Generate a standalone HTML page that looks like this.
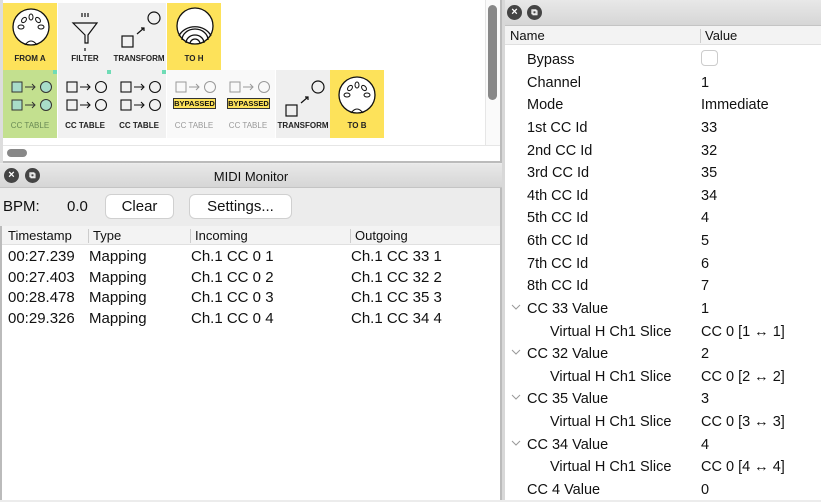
<!DOCTYPE html>
<html><head><style>
*{margin:0;padding:0;box-sizing:border-box}
body{width:821px;height:500px;position:relative;overflow:hidden;background:#ececec;font-family:"Liberation Sans",sans-serif;color:#111}
.a{position:absolute}
.t{font-size:14.5px;white-space:nowrap}
.tile{position:absolute;width:54px;height:68px}
.lab{position:absolute;bottom:8px;left:0;width:100%;text-align:center;font-size:8px;font-weight:bold;color:#222}
.xb{position:absolute;width:15px;height:15px;border-radius:50%;background:#444;color:#fff;font-size:11px;text-align:center;line-height:15px;font-weight:bold}
.btn{position:absolute;background:#fff;border:1px solid #d0d0d0;border-radius:6px;font-size:15px;text-align:center;line-height:23px}
.chev{position:absolute;left:511px}
</style></head><body>
<div class="a" style="left:0;top:0;width:502px;height:163px;background:#fff;border-right:2px solid #bbb;border-bottom:2px solid #bbb"></div>
<div class="a" style="left:0;top:0;width:3px;height:163px;background:#ddd"></div>
<div class="a" style="left:485px;top:0;width:15px;height:145px;background:#fafafa;border-left:1px solid #e6e6e6"></div>
<div class="a" style="left:488px;top:5px;width:9px;height:95px;border-radius:5px;background:#888"></div>
<div class="a" style="left:3px;top:145px;width:497px;height:1px;background:#e6e6e6"></div>
<div class="a" style="left:7px;top:149px;width:20px;height:8px;border-radius:4px;background:#888"></div>

<div class="tile" style="left:3px;top:3px;background:#fde25a"><svg class="a" style="left:9px;top:5px" width="38" height="38"><circle cx="19" cy="19" r="18" fill="#fff" stroke="#111" stroke-width="1.3"/><ellipse cx="19" cy="9" rx="2" ry="3" fill="none" stroke="#111"/><ellipse cx="12" cy="12" rx="2" ry="3" fill="none" stroke="#111" transform="rotate(40 12 12)"/><ellipse cx="26" cy="12" rx="2" ry="3" fill="none" stroke="#111" transform="rotate(-40 26 12)"/><ellipse cx="9" cy="19" rx="3" ry="2" fill="none" stroke="#111"/><ellipse cx="29" cy="19" rx="3" ry="2" fill="none" stroke="#111"/><path d="M13 37 Q19 29 25 37" fill="none" stroke="#111"/></svg><div class="lab">FROM A</div></div>
<div class="tile" style="left:58px;top:3px;background:#f1f1f1"><svg class="a" style="left:13px;top:8px" width="30" height="40" fill="none" stroke="#111" stroke-width="1.2"><path d="M11 2v4M14 2v4M17 2v4M2 12h24L17 24v8h-3V24z M14 37v5"/></svg><div class="lab">FILTER</div></div>
<div class="tile" style="left:112px;top:3px;background:#f1f1f1"><svg class="a" style="left:8px;top:5px" width="42" height="42" fill="none" stroke="#111" stroke-width="1.2"><rect x="2" y="28" width="11" height="11"/><circle cx="34" cy="10" r="6"/><path d="M17 26l7-6m-3 0h3v3"/></svg><div class="lab">TRANSFORM</div></div>
<div class="tile" style="left:167px;top:3px;background:#fde25a"><svg class="a" style="left:8px;top:3px" width="40" height="42" fill="none" stroke="#111" stroke-width="1.3"><circle cx="20" cy="20" r="18" fill="#fff"/><path d="M4 30a17 14 0 0 1 32 0M7 34a13 11 0 0 1 26 0M11 37a9 8 0 0 1 18 0M15 38a5 5 0 0 1 10 0"/></svg><div class="lab">TO H</div></div>

<div class="tile" style="left:3px;top:70px;height:68px;background:#c3e08f"><svg class="a" style="left:8px;top:10px" width="42" height="34" stroke="#333" stroke-width="1"><rect x="1" y="2" width="10" height="10" fill="#a8dcc9"/><circle cx="35" cy="7" r="5.5" fill="#a8dcc9"/><path d="M14 7h10m-3-3l3 3-3 3" fill="none"/><rect x="1" y="20" width="10" height="10" fill="#a8dcc9"/><circle cx="35" cy="25" r="5.5" fill="#a8dcc9"/><path d="M14 25h10m-3-3l3 3-3 3" fill="none"/></svg><div class="lab" style="color:#6a8a55;font-weight:normal">CC TABLE</div></div>
<div class="a" style="left:53px;top:70px;width:4px;height:4px;background:#6fdcb6"></div>
<div class="tile" style="left:58px;top:70px;background:#f1f1f1"><svg class="a" style="left:8px;top:10px" width="42" height="34" stroke="#111" stroke-width="1.1" fill="none"><rect x="1" y="2" width="10" height="10"/><circle cx="35" cy="7" r="5.5"/><path d="M14 7h10m-3-3l3 3-3 3"/><rect x="1" y="20" width="10" height="10"/><circle cx="35" cy="25" r="5.5"/><path d="M14 25h10m-3-3l3 3-3 3"/></svg><div class="lab">CC TABLE</div></div>
<div class="a" style="left:107px;top:70px;width:4px;height:4px;background:#6fdcb6"></div>
<div class="tile" style="left:112px;top:70px;background:#f1f1f1"><svg class="a" style="left:8px;top:10px" width="42" height="34" stroke="#111" stroke-width="1.1" fill="none"><rect x="1" y="2" width="10" height="10"/><circle cx="35" cy="7" r="5.5"/><path d="M14 7h10m-3-3l3 3-3 3"/><rect x="1" y="20" width="10" height="10"/><circle cx="35" cy="25" r="5.5"/><path d="M14 25h10m-3-3l3 3-3 3"/></svg><div class="lab">CC TABLE</div></div>
<div class="a" style="left:162px;top:70px;width:4px;height:4px;background:#6fdcb6"></div>
<div class="tile" style="left:167px;top:70px;background:#f9f9f9"><svg class="a" style="left:8px;top:10px" width="42" height="34" stroke="#999" stroke-width="1" fill="none"><rect x="1" y="2" width="10" height="10"/><circle cx="35" cy="7" r="5.5"/><path d="M14 7h10m-3-3l3 3-3 3"/></svg><div class="a" style="left:6px;top:28px;width:43px;height:11px;background:#fde25a;border:1px solid #333;font-size:7.5px;font-weight:bold;text-align:center;line-height:9px">BYPASSED</div><div class="lab" style="color:#999;font-weight:normal">CC TABLE</div></div>
<div class="tile" style="left:221px;top:70px;background:#f9f9f9"><svg class="a" style="left:8px;top:10px" width="42" height="34" stroke="#999" stroke-width="1" fill="none"><rect x="1" y="2" width="10" height="10"/><circle cx="35" cy="7" r="5.5"/><path d="M14 7h10m-3-3l3 3-3 3"/></svg><div class="a" style="left:6px;top:28px;width:43px;height:11px;background:#fde25a;border:1px solid #333;font-size:7.5px;font-weight:bold;text-align:center;line-height:9px">BYPASSED</div><div class="lab" style="color:#999;font-weight:normal">CC TABLE</div></div>
<div class="tile" style="left:276px;top:70px;background:#efefef"><svg class="a" style="left:8px;top:7px" width="42" height="42" fill="none" stroke="#111" stroke-width="1.2"><rect x="2" y="28" width="11" height="11"/><circle cx="34" cy="10" r="6"/><path d="M17 26l7-6m-3 0h3v3"/></svg><div class="lab">TRANSFORM</div></div>
<div class="tile" style="left:330px;top:70px;background:#fde25a"><svg class="a" style="left:8px;top:6px" width="38" height="38"><circle cx="19" cy="19" r="18" fill="#fff" stroke="#111" stroke-width="1.3"/><ellipse cx="19" cy="9" rx="2" ry="3" fill="none" stroke="#111"/><ellipse cx="12" cy="12" rx="2" ry="3" fill="none" stroke="#111" transform="rotate(40 12 12)"/><ellipse cx="26" cy="12" rx="2" ry="3" fill="none" stroke="#111" transform="rotate(-40 26 12)"/><ellipse cx="9" cy="19" rx="3" ry="2" fill="none" stroke="#111"/><ellipse cx="29" cy="19" rx="3" ry="2" fill="none" stroke="#111"/><path d="M13 37 Q19 29 25 37" fill="none" stroke="#111"/></svg><div class="lab">TO B</div></div>

<div class="a" style="left:0;top:164px;width:502px;height:24px;background:linear-gradient(#e8e8e8,#d6d6d6);border-bottom:1px solid #c4c4c4"></div>
<div class="xb" style="left:4px;top:168px">×</div><div class="xb" style="left:25px;top:168px;font-size:9px">⧉</div>
<div class="a t" style="left:0;width:502px;top:169px;text-align:center;font-size:13px">MIDI Monitor</div>
<div class="a" style="left:0;top:188px;width:502px;height:38px;background:#ececec;border-right:2px solid #bbb"></div>
<div class="a t" style="left:3px;top:198px;font-size:15px">BPM:</div>
<div class="a t" style="left:67px;top:198px;font-size:15px">0.0</div>
<div class="btn" style="left:105px;top:194px;width:69px;height:25px">Clear</div>
<div class="btn" style="left:189px;top:194px;width:103px;height:25px">Settings...</div>
<div class="a" style="left:0;top:226px;width:502px;height:274px;background:#fff;border-right:2px solid #bbb;border-left:2px solid #bbb"></div>
<div class="a" style="left:2px;top:226px;width:498px;height:19px;background:#f3f3f3;border-bottom:1px solid #e0e0e0"></div>
<div class="a t" style="left:8px;top:228px;font-size:13px">Timestamp</div>
<div class="a" style="left:88px;top:229px;width:1px;height:14px;background:#ccc"></div>
<div class="a t" style="left:93px;top:228px;font-size:13px">Type</div>
<div class="a" style="left:190px;top:229px;width:1px;height:14px;background:#ccc"></div>
<div class="a t" style="left:195px;top:228px;font-size:13px">Incoming</div>
<div class="a" style="left:350px;top:229px;width:1px;height:14px;background:#ccc"></div>
<div class="a t" style="left:355px;top:228px;font-size:13px">Outgoing</div>
<div class="a t" style="left:8px;top:247px;line-height:20.6px;font-size:15px">00:27.239<br>00:27.403<br>00:28.478<br>00:29.326</div>
<div class="a t" style="left:89px;top:247px;line-height:20.6px;font-size:15px">Mapping<br>Mapping<br>Mapping<br>Mapping</div>
<div class="a t" style="left:191px;top:247px;line-height:20.6px;font-size:15px">Ch.1 CC 0 1<br>Ch.1 CC 0 2<br>Ch.1 CC 0 3<br>Ch.1 CC 0 4</div>
<div class="a t" style="left:351px;top:247px;line-height:20.6px;font-size:15px">Ch.1 CC 33 1<br>Ch.1 CC 32 2<br>Ch.1 CC 35 3<br>Ch.1 CC 34 4</div>

<div class="a" style="left:502px;top:0;width:3px;height:500px;background:#d8d8d8"></div>
<div class="a" style="left:505px;top:0;width:316px;height:26px;background:linear-gradient(#e8e8e8,#d6d6d6);border-bottom:1px solid #c4c4c4"></div>
<div class="xb" style="left:507px;top:5px">×</div><div class="xb" style="left:527px;top:5px;font-size:9px">⧉</div>
<div class="a" style="left:505px;top:26px;width:316px;height:474px;background:#fff"></div>
<div class="a" style="left:505px;top:26px;width:316px;height:19px;background:#f3f3f3;border-bottom:1px solid #e0e0e0"></div>
<div class="a t" style="left:510px;top:28px;font-size:13px">Name</div>
<div class="a" style="left:700px;top:29px;width:1px;height:14px;background:#ccc"></div>
<div class="a t" style="left:705px;top:28px;font-size:13px">Value</div>
<div class="a" style="left:701px;top:50px;width:17px;height:16px;border:1px solid #ccc;border-radius:4px;background:#fff"></div>
<div class="a t" style="left:527px;top:49px;line-height:22.63px;font-size:14.5px">Bypass<br>Channel<br>Mode<br>1st CC Id<br>2nd CC Id<br>3rd CC Id<br>4th CC Id<br>5th CC Id<br>6th CC Id<br>7th CC Id<br>8th CC Id<br>CC 33 Value<br><span style="padding-left:23px">Virtual H Ch1 Slice</span><br>CC 32 Value<br><span style="padding-left:23px">Virtual H Ch1 Slice</span><br>CC 35 Value<br><span style="padding-left:23px">Virtual H Ch1 Slice</span><br>CC 34 Value<br><span style="padding-left:23px">Virtual H Ch1 Slice</span><br>CC 4 Value</div>
<div class="a t" style="left:701px;top:49px;line-height:22.63px;font-size:14.5px">&nbsp;<br>1<br>Immediate<br>33<br>32<br>35<br>34<br>4<br>5<br>6<br>7<br>1<br>CC 0 [1 ↔ 1]<br>2<br>CC 0 [2 ↔ 2]<br>3<br>CC 0 [3 ↔ 3]<br>4<br>CC 0 [4 ↔ 4]<br>0</div>
<svg class="chev" style="top:304px" width="10" height="6"><path d="M1 1l4 4 4-4" fill="none" stroke="#999"/></svg>
<svg class="chev" style="top:349px" width="10" height="6"><path d="M1 1l4 4 4-4" fill="none" stroke="#999"/></svg>
<svg class="chev" style="top:394px" width="10" height="6"><path d="M1 1l4 4 4-4" fill="none" stroke="#999"/></svg>
<svg class="chev" style="top:440px" width="10" height="6"><path d="M1 1l4 4 4-4" fill="none" stroke="#999"/></svg>
</body></html>
